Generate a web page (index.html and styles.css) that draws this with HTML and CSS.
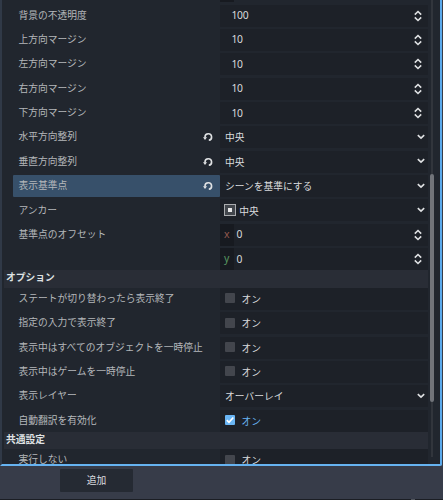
FILE: index.html
```html
<!DOCTYPE html>
<html lang="ja">
<head>
<meta charset="utf-8">
<title>Inspector</title>
<link rel="stylesheet" href="styles.css">
</head>
<body>
<svg class="defs" aria-hidden="true">
  <symbol id="spin" viewBox="0 0 8 12"><path d="M.8 4.6 4 1.5l3.2 3.1M.8 7.4 4 10.5l3.2-3.1"/></symbol>
  <symbol id="down" viewBox="0 0 8 6"><path d="M.8 1.2 4 4.2l3.2-3"/></symbol>
  <symbol id="reset" viewBox="0 0 10 10"><path d="M2 5.8V5a3.3 3.3 0 1 1 3.8 3.3"/><path class="tip" d="M0 5.2h4.1L2 7.9z"/></symbol>
  <symbol id="check" viewBox="0 0 10 10"><path d="M1.8 5.1 4 7.4 8.3 2.5"/></symbol>
</svg>
<main class="panel">
  <div class="list">
    <div class="previous"></div>
    <div class="rows">
      <div class="row"><div class="label">背景の不透明度</div><div class="field num"><span>100</span><svg class="spin"><use href="#spin"/></svg></div></div>
      <div class="row"><div class="label">上方向マージン</div><div class="field num"><span>10</span><svg class="spin"><use href="#spin"/></svg></div></div>
      <div class="row"><div class="label">左方向マージン</div><div class="field num"><span>10</span><svg class="spin"><use href="#spin"/></svg></div></div>
      <div class="row"><div class="label">右方向マージン</div><div class="field num"><span>10</span><svg class="spin"><use href="#spin"/></svg></div></div>
      <div class="row"><div class="label">下方向マージン</div><div class="field num"><span>10</span><svg class="spin"><use href="#spin"/></svg></div></div>
      <div class="row"><div class="label">水平方向整列<svg class="reset"><use href="#reset"/></svg></div><div class="field"><span>中央</span><svg class="down"><use href="#down"/></svg></div></div>
      <div class="row"><div class="label">垂直方向整列<svg class="reset"><use href="#reset"/></svg></div><div class="field"><span>中央</span><svg class="down"><use href="#down"/></svg></div></div>
      <div class="row"><div class="label selected">表示基準点<svg class="reset"><use href="#reset"/></svg></div><div class="field"><span>シーンを基準にする</span><svg class="down"><use href="#down"/></svg></div></div>
      <div class="row"><div class="label">アンカー</div><div class="field"><i class="anchor"></i><span>中央</span><svg class="down"><use href="#down"/></svg></div></div>
      <div class="row"><div class="label">基準点のオフセット</div><div class="field axis"><b class="x">x</b><span>0</span><svg class="spin"><use href="#spin"/></svg></div></div>
      <div class="row"><div class="label"></div><div class="field axis"><b class="y">y</b><span>0</span><svg class="spin"><use href="#spin"/></svg></div></div>
    </div>
    <h2 class="section">オプション</h2>
    <div class="rows">
      <div class="row"><div class="label">ステートが切り替わったら表示終了</div><div class="field"><i class="box"></i><span>オン</span></div></div>
      <div class="row"><div class="label">指定の入力で表示終了</div><div class="field"><i class="box"></i><span>オン</span></div></div>
      <div class="row"><div class="label">表示中はすべてのオブジェクトを一時停止</div><div class="field"><i class="box"></i><span>オン</span></div></div>
      <div class="row"><div class="label">表示中はゲームを一時停止</div><div class="field"><i class="box"></i><span>オン</span></div></div>
      <div class="row"><div class="label">表示レイヤー</div><div class="field"><span>オーバーレイ</span><svg class="down"><use href="#down"/></svg></div></div>
      <div class="row"><div class="label">自動翻訳を有効化</div><div class="field on"><i class="box"><svg><use href="#check"/></svg></i><span>オン</span></div></div>
    </div>
    <h2 class="section">共通設定</h2>
    <div class="rows">
      <div class="row"><div class="label">実行しない</div><div class="field"><i class="box"></i><span>オン</span></div></div>
    </div>
  </div>
  <div class="track"><div class="thumb"></div></div>
</main>
<footer class="footer"><button class="add">追加</button></footer>
<div class="splitter"></div>
</body>
</html>
```
FILE: styles.css
```css
* { box-sizing: border-box; }
body {
  margin: 0;
  width: 443px;
  height: 500px;
  overflow: hidden;
  display: flex;
  flex-direction: column;
  background: #373c49;
  color: #d9dbdd;
  font: 9.75px/14px "Noto Sans CJK JP", sans-serif;
}
.defs { position: absolute; width: 0; height: 0; }
svg { fill: none; stroke: #dfe1e3; stroke-width: 1.6; flex: none; }
.tip { fill: #dfe1e3; stroke: none; }
.panel {
  height: 466px;
  width: 442px;
  flex: none;
  display: flex;
  overflow: hidden;
  background: #21262e;
  border-left: 2px solid #303947;
  border-right: 2px solid #5aa9eb;
  border-bottom: 2px solid #66b3f1;
  border-bottom-right-radius: 2px;
}
.list { width: 426px; padding-left: 2px; flex: none; }
.previous { width: 14px; height: 2px; margin: 0 0 2.6px 216px; background: #171a20; }
.rows { display: flex; flex-direction: column; gap: 2.37px; }
.row { display: flex; height: 22px; flex: none; }
.label {
  width: 207.5px;
  margin-left: 8.5px;
  padding: 0 7px 1.8px 6px;
  display: flex;
  align-items: center;
  justify-content: space-between;
  color: #b4b7ba;
  white-space: nowrap;
  border-radius: 1px;
}
.selected { background: #37506a; }
.field {
  flex: 1;
  display: flex;
  align-items: center;
  padding: 0 3px 0 5px;
  background: #1d2128;
  border-radius: 1px;
}
.field span { position: relative; top: .1px; }
.num { padding-left: 11.5px; }
.num span, .axis span { top: -.5px; font: 10.3px/14px "Noto Sans", sans-serif; letter-spacing: -.3px; }
.spin { width: 8px; height: 12px; margin: 0 3px 0 auto; }
.down { width: 8px; height: 6px; margin: -1px 0 0 auto; }
.reset { width: 10px; height: 10px; margin-top: 2px; }
.axis { padding-left: 0; }
.axis b {
  width: 14px;
  height: 22px;
  margin-right: 2.5px;
  padding-left: 4px;
  font: 10.5px/20px "Noto Sans", sans-serif;
  background: #171a20;
}
.axis .x { color: #93594f; }
.axis .y { color: #589760; }
.anchor {
  width: 12px;
  height: 12px;
  margin: -1px 3.3px 0 -1px;
  border: 1.5px solid #aaacaf;
  background: linear-gradient(#e6e7e8, #e6e7e8) center / 4px 4px no-repeat #42464c;
}
.box {
  width: 10px;
  height: 10px;
  margin: -1px 6.5px 0 0;
  border-radius: 1px;
  background: #43464d;
}
.box svg { display: block; width: 10px; height: 10px; stroke: #fff; }
.on { color: #69b5f4; }
.on .box { background: #69b5f4; }
.section {
  height: 17.6px;
  margin: 0;
  padding-left: 2px;
  font-size: 9.75px;
  line-height: 15px;
  font-weight: 700;
  color: #dfe1e3;
  background: #292d36;
}
.track {
  width: 2px;
  height: 457px;
  margin-left: 3px;
  background: #31353c;
  display: flex;
  justify-content: center;
}
.thumb { width: 4px; height: 228px; margin-top: 174px; flex: none; border-radius: 2px; background: #71747a; }
.footer { flex: 1; padding: 3px 0 0 60px; }
.add {
  display: block;
  width: 73px;
  height: 23px;
  padding: 0 0 2px;
  border: 0;
  border-radius: 1px;
  background: #252a33;
  color: #dcdee0;
  font: inherit;
}
.splitter { height: 1.5px; background: linear-gradient(#50545c, #50545c) 411px 0 / 4px 100% no-repeat #1b1e24; }
```
